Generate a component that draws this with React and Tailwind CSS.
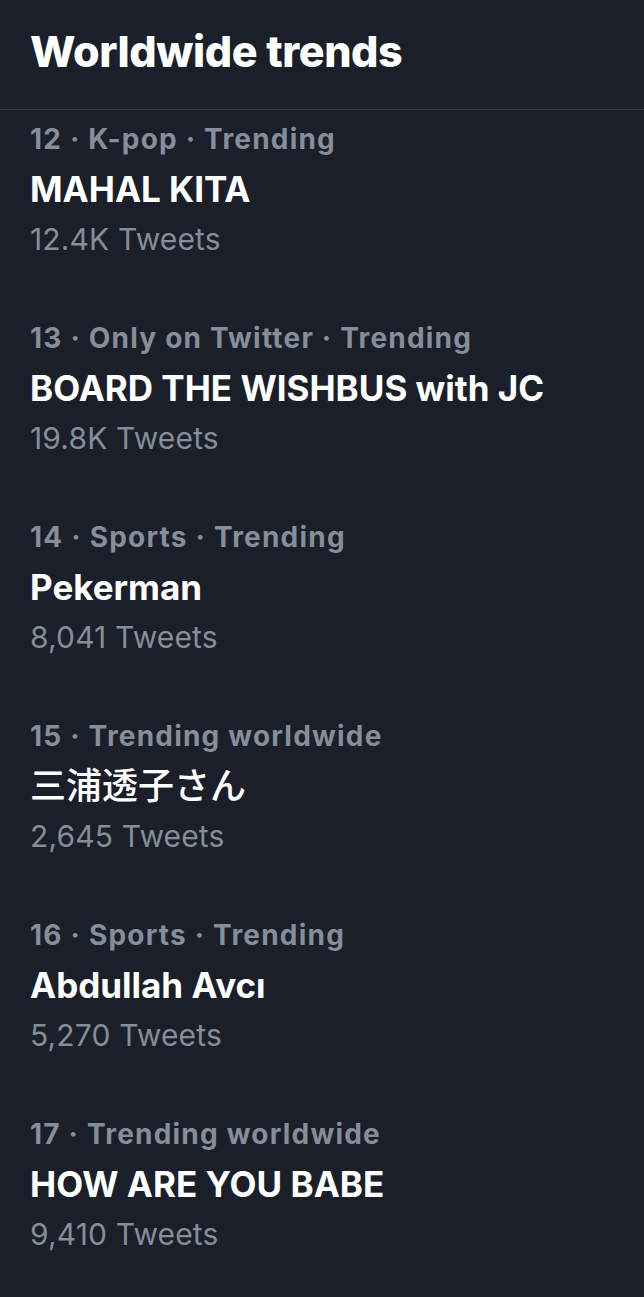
const trends = [
  { rank: 12, meta: 'K-pop · Trending', title: 'MAHAL KITA', count: '12.4K Tweets' },
  { rank: 13, meta: 'Only on Twitter · Trending', title: 'BOARD THE WISHBUS with JC', count: '19.8K Tweets' },
  { rank: 14, meta: 'Sports · Trending', title: 'Pekerman', count: '8,041 Tweets' },
  { rank: 15, meta: 'Trending worldwide', title: '三浦透子さん', count: '2,645 Tweets', cjk: true },
  { rank: 16, meta: 'Sports · Trending', title: 'Abdullah Avcı', count: '5,270 Tweets' },
  { rank: 17, meta: 'Trending worldwide', title: 'HOW ARE YOU BABE', count: '9,410 Tweets' },
]

export default function App() {
  return (
    <div
      className="min-h-[1297px] w-full bg-[#1a1f29] text-white antialiased"
      style={{ fontFamily: 'Inter, "Noto Sans CJK JP", sans-serif' }}
    >
      {/* Header */}
      <header className="h-[110px] border-b border-[#30363f] px-[30px] pt-[26px]">
        <h1 className="text-[43px] leading-[50px] font-extrabold tracking-[-0.4px]">Worldwide trends</h1>
      </header>

      {/* Trend list */}
      <ul>
        {trends.map((t) => (
          <TrendRow key={t.rank} {...t} />
        ))}
      </ul>
    </div>
  )
}

function TrendRow({ rank, meta, title, count, cjk }) {
  return (
    <li className="px-[30px] pt-[4px] pb-[45px]">
      <div className="text-[28px] leading-[50px] font-bold text-[#858e9a] tracking-[1.2px]">
        {rank} · {meta}
      </div>
      <div
        className={
          cjk
            ? 'text-[36px] leading-[50px] font-medium'
            : 'text-[35px] leading-[50px] font-bold'
        }
      >
        {title}
      </div>
      <div className="text-[30px] leading-[50px] text-[#858e9a] tracking-[0.15px]">{count}</div>
    </li>
  )
}
